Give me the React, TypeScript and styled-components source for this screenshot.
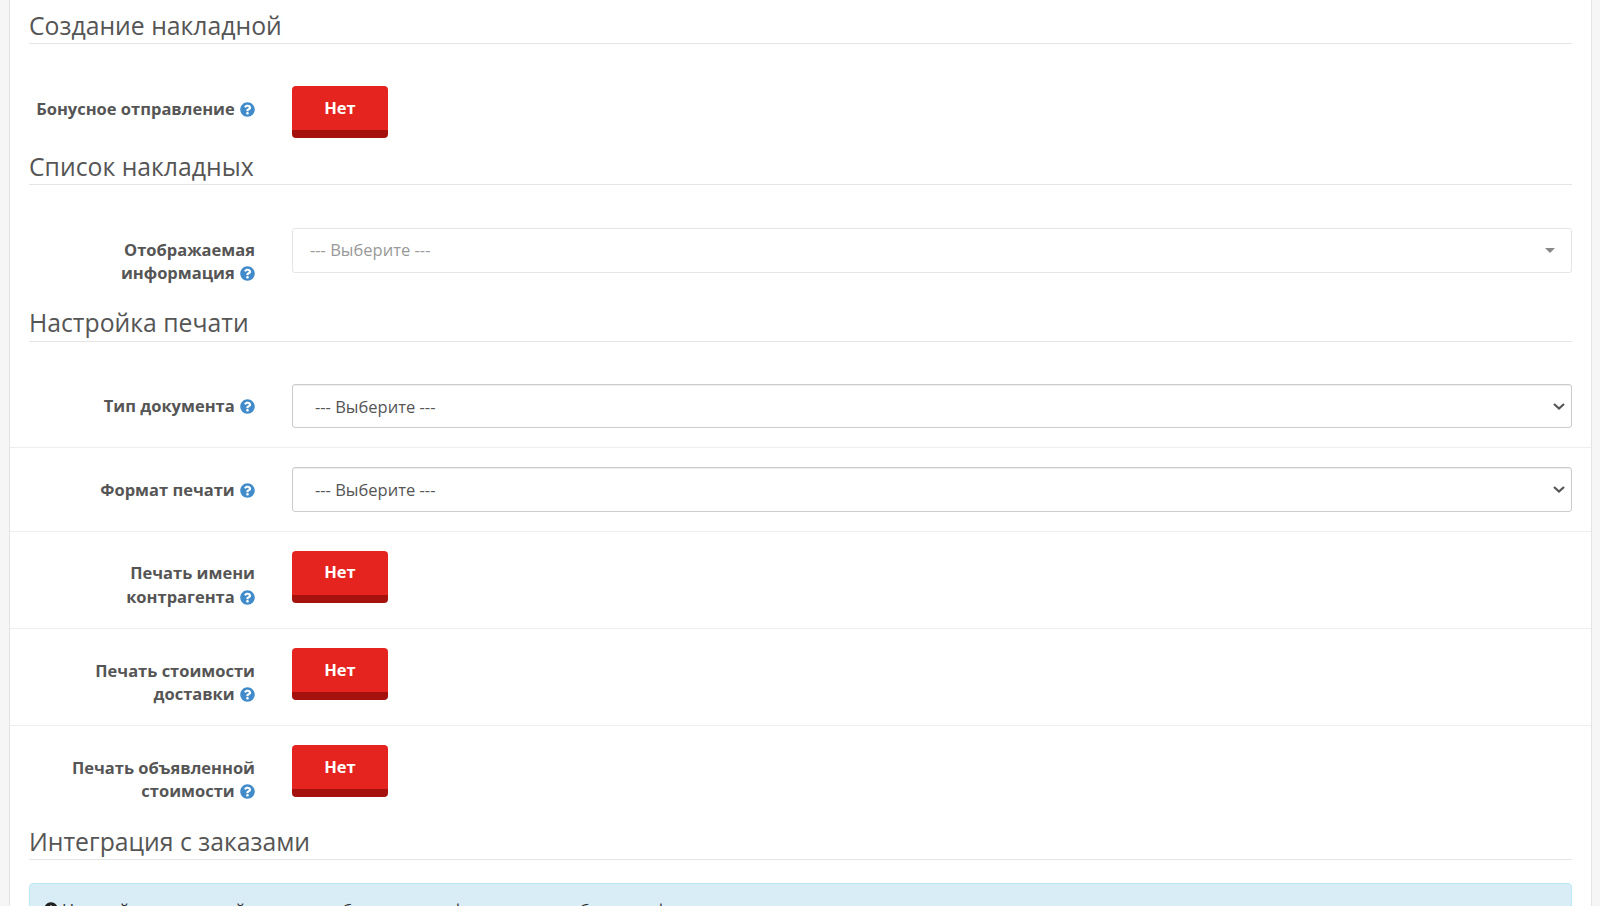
import styled, { createGlobalStyle } from 'styled-components'
import { FaInfoCircle, FaQuestionCircle } from 'react-icons/fa'

const GlobalStyle = createGlobalStyle`
  html, body {
    margin: 0;
    height: 906px;
    overflow: hidden;
    background: #f6f6f6;
    font-family: 'Open Sans', sans-serif;
    color: #555;
  }
`

const App = () => {
  return (
    <>
      <GlobalStyle />
      <Panel>
        <Legend>Создание накладной</Legend>
        <Row>
          <Label text="Бонусное отправление" />
          <Toggle>Нет</Toggle>
        </Row>

        <Legend>Список накладных</Legend>
        <Row>
          <Label text="Отображаемая информация" />
          <FakeSelect>
            --- Выберите ---
            <Caret />
          </FakeSelect>
        </Row>

        <Legend>Настройка печати</Legend>
        <Row>
          <Label text="Тип документа" />
          <Dropdown />
        </Row>
        <Row $divided>
          <Label text="Формат печати" />
          <Dropdown />
        </Row>
        <Row $divided>
          <Label text="Печать имени контрагента" />
          <Toggle>Нет</Toggle>
        </Row>
        <Row $divided>
          <Label text="Печать стоимости доставки" />
          <Toggle>Нет</Toggle>
        </Row>
        <Row $divided>
          <Label text="Печать объявленной стоимости" />
          <Toggle>Нет</Toggle>
        </Row>

        <Legend>Интеграция с заказами</Legend>
        <Alert>
          <FaInfoCircle />
          Настройки следующей группы необходимы для формирования бланка и фиксации заказов
        </Alert>
      </Panel>
    </>
  )
}

const Label = ({ text }: { text: string }) => (
  <LabelText>
    {text} <HelpIcon />
  </LabelText>
)

const Dropdown = () => (
  <SelectWrap>
    <NativeSelect>
      <option>--- Выберите ---</option>
    </NativeSelect>
    <Chevron viewBox="0 0 12 7">
      <path d="M1 1l5 4.5L11 1" fill="none" stroke="#555" strokeWidth="2.2" />
    </Chevron>
  </SelectWrap>
)

export default App

const Panel = styled.div`
  box-sizing: border-box;
  width: 1583px;
  height: 906px;
  margin-left: 9px;
  padding: 0 19px;
  background: #fff;
  border-left: 1px solid #e4e4e4;
  border-right: 1px solid #e4e4e4;
  overflow: hidden;
`

const Legend = styled.div`
  box-sizing: border-box;
  height: 37.5px;
  border-bottom: 1px solid #e5e5e5;
  font-size: 24.75px;
  line-height: 37.5px;
  color: #555;

  &:first-child {
    height: 44px;
    padding-top: 7px;
  }
`

const Row = styled.div<{ $divided?: boolean }>`
  display: flex;
  align-items: flex-start;
  gap: 37px;
  margin: ${(p) => (p.$divided ? '0 -19px' : '0')};
  padding: ${(p) => (p.$divided ? '19px 19px 9.5px' : '42px 0 9.6px')};
  border-top: ${(p) => (p.$divided ? '1px solid #eee' : 'none')};
`

const LabelText = styled.label`
  box-sizing: border-box;
  flex: 0 0 226px;
  padding: 10.5px 0 10px;
  text-align: right;
  font-size: 16.5px;
  line-height: 23.6px;
  font-weight: 700;
  color: #555;
`

const HelpIcon = styled(FaQuestionCircle)`
  width: 15px;
  height: 15px;
  margin-left: 1px;
  vertical-align: -2px;
  color: #428bca;
`

const Toggle = styled.button`
  box-sizing: border-box;
  width: 96px;
  height: 52px;
  padding: 0 0 2px;
  background: #e5231f;
  border: none;
  border-bottom: 8px solid #a5120d;
  border-radius: 4px;
  font-family: inherit;
  font-size: 16.5px;
  font-weight: 700;
  color: #fff;
`

const FakeSelect = styled.div`
  box-sizing: border-box;
  position: relative;
  flex: 1;
  height: 45px;
  margin-top: 1px;
  padding: 0 17px;
  border: 1px solid #e5e5e5;
  border-radius: 3px;
  font-size: 16.5px;
  line-height: 42px;
  color: #999;
`

const Caret = styled.span`
  position: absolute;
  top: 19px;
  right: 16px;
  border-top: 5px solid #888;
  border-left: 5px solid transparent;
  border-right: 5px solid transparent;
`

const SelectWrap = styled.div`
  position: relative;
  flex: 1;
  height: 44.5px;
  margin-bottom: 9.5px;
`

const NativeSelect = styled.select`
  appearance: none;
  box-sizing: border-box;
  display: block;
  width: 100%;
  height: 100%;
  padding: 0 22px;
  background: #fff;
  border: 1px solid #ccc;
  border-radius: 3px;
  box-shadow: inset 0 1px 1px rgba(0, 0, 0, 0.075);
  font-family: inherit;
  font-size: 16.5px;
  color: #555;
`

const Chevron = styled.svg`
  position: absolute;
  top: 19px;
  right: 7px;
  width: 12px;
  height: 7px;
  pointer-events: none;
`

const Alert = styled.div`
  box-sizing: border-box;
  margin-top: 22.5px;
  height: 60px;
  padding: 14px 14px;
  background: #d9edf7;
  border: 1px solid #bce8f1;
  border-radius: 4px;
  font-size: 16.5px;
  line-height: 24px;
  color: #333;

  svg {
    width: 14px;
    height: 14px;
    margin-right: 4px;
    color: #222;
    vertical-align: 0;
  }
`
